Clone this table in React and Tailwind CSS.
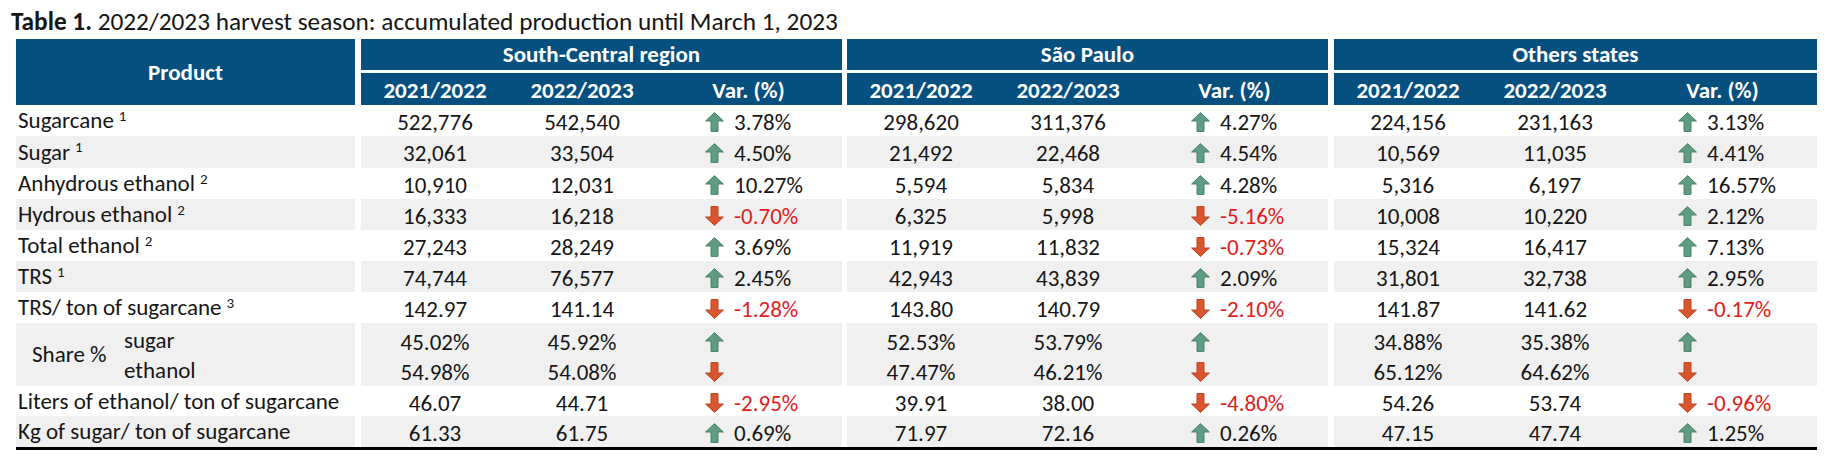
const FONT = "font-['Carlito','Calibri','Lato',sans-serif]";

const ROWS = [
  { label: 'Sugarcane', sup: '1', h: 'h-[31px]', gray: false, groups: [['522,776', '542,540', 'up', '3.78%'], ['298,620', '311,376', 'up', '4.27%'], ['224,156', '231,163', 'up', '3.13%']] },
  { label: 'Sugar', sup: '1', h: 'h-[32px]', gray: true, groups: [['32,061', '33,504', 'up', '4.50%'], ['21,492', '22,468', 'up', '4.54%'], ['10,569', '11,035', 'up', '4.41%']] },
  { label: 'Anhydrous ethanol', sup: '2', h: 'h-[31px]', gray: false, groups: [['10,910', '12,031', 'up', '10.27%'], ['5,594', '5,834', 'up', '4.28%'], ['5,316', '6,197', 'up', '16.57%']] },
  { label: 'Hydrous ethanol', sup: '2', h: 'h-[31px]', gray: true, groups: [['16,333', '16,218', 'down', '-0.70%'], ['6,325', '5,998', 'down', '-5.16%'], ['10,008', '10,220', 'up', '2.12%']] },
  { label: 'Total ethanol', sup: '2', h: 'h-[31px]', gray: false, groups: [['27,243', '28,249', 'up', '3.69%'], ['11,919', '11,832', 'down', '-0.73%'], ['15,324', '16,417', 'up', '7.13%']] },
  { label: 'TRS', sup: '1', h: 'h-[31px]', gray: true, groups: [['74,744', '76,577', 'up', '2.45%'], ['42,943', '43,839', 'up', '2.09%'], ['31,801', '32,738', 'up', '2.95%']] },
  { label: 'TRS/ ton of sugarcane', sup: '3', h: 'h-[31px]', gray: false, groups: [['142.97', '141.14', 'down', '-1.28%'], ['143.80', '140.79', 'down', '-2.10%'], ['141.87', '141.62', 'down', '-0.17%']] },
];

const SHARE = [
  [['45.02%', '45.92%', 'up'], ['54.98%', '54.08%', 'down']],
  [['52.53%', '53.79%', 'up'], ['47.47%', '46.21%', 'down']],
  [['34.88%', '35.38%', 'up'], ['65.12%', '64.62%', 'down']],
];

const TAIL = [
  { label: 'Liters of ethanol/ ton of sugarcane', h: 'h-[30px]', gray: false, groups: [['46.07', '44.71', 'down', '-2.95%'], ['39.91', '38.00', 'down', '-4.80%'], ['54.26', '53.74', 'down', '-0.96%']] },
  { label: 'Kg of sugar/ ton of sugarcane', h: 'h-[31px]', gray: true, groups: [['61.33', '61.75', 'up', '0.69%'], ['71.97', '72.16', 'up', '0.26%'], ['47.15', '47.74', 'up', '1.25%']] },
];

const GROUPS = [
  { name: 'South-Central region', cls: 'ml-[6px] w-[481px]' },
  { name: 'São Paulo', cls: 'ml-[5px] w-[481px]' },
  { name: 'Others states', cls: 'ml-[6px] w-[483px]' },
];

function Arrow({ dir }) {
  if (dir === 'up') {
    return (
      <svg width="19" height="20" viewBox="0 0 19 20" className="shrink-0">
        <polygon points="9.5,0.6 18.4,9 13,9 13,19.4 6,19.4 6,9 0.6,9" fill="#5f9c84" stroke="#4b8169" strokeWidth="1" />
      </svg>
    );
  }
  return (
    <svg width="19" height="20" viewBox="0 0 19 20" className="shrink-0">
      <polygon points="9.5,19.4 18.4,11 13,11 13,0.6 6,0.6 6,11 0.6,11" fill="#d9552d" stroke="#bc4422" strokeWidth="1" />
    </svg>
  );
}

function VarCell({ dir, value }) {
  return (
    <div className="flex items-center pl-[50px]">
      <Arrow dir={dir} />
      {value && <span className={`ml-[10px] ${dir === 'down' ? 'text-[#e0201c]' : ''}`}>{value}</span>}
    </div>
  );
}

function GroupCells({ data, gray, cls }) {
  return (
    <div className={`${cls} ${gray ? 'bg-[#f0f0f0]' : 'bg-white'} grid grid-cols-[148px_146px_1fr] items-center`}>
      <div className="text-center">{data[0]}</div>
      <div className="text-center">{data[1]}</div>
      <VarCell dir={data[2]} value={data[3]} />
    </div>
  );
}

function DataRow({ row }) {
  const bg = row.gray ? 'bg-[#f0f0f0]' : 'bg-white';
  return (
    <div className={`flex ${row.h}`}>
      <div className={`w-[339px] ${bg} flex items-center pl-[2px]`}>
        <span>
          {row.label}
          {row.sup && <sup className="ml-[5px] text-[15px]">{row.sup}</sup>}
        </span>
      </div>
      {GROUPS.map((g, i) => (
        <GroupCells key={g.name} cls={g.cls} data={row.groups[i]} gray={row.gray} />
      ))}
    </div>
  );
}

function ShareRow() {
  return (
    <div className="flex h-[63px]">
      <div className="w-[339px] bg-[#f0f0f0] flex items-center">
        <span className="pl-[16px] w-[108px]">Share %</span>
        <div className="flex flex-col">
          <span className="h-[30px] leading-[30px]">sugar</span>
          <span className="h-[30px] leading-[30px]">ethanol</span>
        </div>
      </div>
      {GROUPS.map((g, i) => (
        <div key={g.name} className={`${g.cls} bg-[#f0f0f0] flex flex-col justify-center`}>
          {SHARE[i].map((line, j) => (
            <div key={j} className="grid grid-cols-[148px_146px_1fr] items-center h-[30px]">
              <div className="text-center">{line[0]}</div>
              <div className="text-center">{line[1]}</div>
              <VarCell dir={line[2]} />
            </div>
          ))}
        </div>
      ))}
    </div>
  );
}

export default function App() {
  return (
    <div className={`w-[1829px] h-[466px] bg-white text-[#161616] text-[23px] ${FONT}`}>
      <p className="h-[39px] pl-[11px] pt-[8px] text-[25.3px] leading-[28px]">
        <span className="font-bold">Table 1.</span> 2022/2023 harvest season: accumulated production until March 1, 2023
      </p>
      <div className="ml-[16px] w-[1801px]">
        <div className="flex h-[66px] text-white font-bold">
          <div className="w-[339px] bg-[#05507f] flex items-center justify-center">Product</div>
          {GROUPS.map((g) => (
            <div key={g.name} className={`${g.cls} flex flex-col`}>
              <div className="h-[31px] bg-[#05507f] flex items-center justify-center">{g.name}</div>
              <div className="h-[3px]" />
              <div className="h-[32px] bg-[#05507f] grid grid-cols-[148px_146px_1fr] items-center">
                <div className="text-center">2021/2022</div>
                <div className="text-center">2022/2023</div>
                <div className="text-center">Var. (%)</div>
              </div>
            </div>
          ))}
        </div>
        {ROWS.map((row) => (
          <DataRow key={row.label} row={row} />
        ))}
        <ShareRow />
        {TAIL.map((row) => (
          <DataRow key={row.label} row={row} />
        ))}
        <div className="h-[3px] bg-black" />
      </div>
    </div>
  );
}
